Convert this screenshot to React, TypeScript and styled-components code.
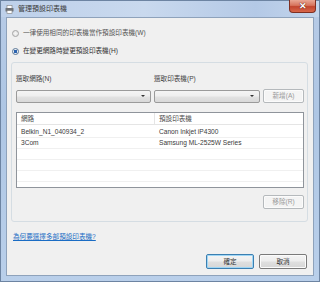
import React from 'react';
import styled, { createGlobalStyle } from 'styled-components';

const GlobalStyle = createGlobalStyle`
  html, body {
    margin: 0;
    padding: 0;
    background: #ffffff;
  }
  * {
    box-sizing: border-box;
  }
`;

const FONT = `"Liberation Sans", "Noto Sans CJK TC", sans-serif`;

// 視窗外框
const Window = styled.div`
  width: 320px;
  height: 282px;
  display: flex;
  flex-direction: column;
  border: 1px solid #6d84a2;
  background: linear-gradient(to bottom, #b7cbe6 0%, #aec6e4 40%, #b9cfea 100%);
  font-family: ${FONT};
  color: #333;
`;

const TitleBar = styled.div`
  height: 16px;
  display: flex;
  align-items: center;
  padding-left: 4px;
  gap: 4px;
  position: relative;
  background: linear-gradient(to right, #bdd0ea 0%, #c9d9ee 45%, #b4c9e6 80%, #c3d5ec 100%);
`;

const TitleText = styled.span`
  font-size: 7px;
  line-height: 8px;
  color: #3a3a3a;
`;

const CloseButton = styled.div`
  position: absolute;
  top: -1px;
  right: 3px;
  width: 27px;
  height: 13px;
  border: 1px solid #7f2f22;
  border-top: none;
  border-radius: 0 0 4px 4px;
  background: linear-gradient(to bottom, #e9a795 0%, #d7745d 45%, #c2452f 55%, #d8674a 100%);
  display: flex;
  align-items: center;
  justify-content: center;
  color: #ffffff;
  font-size: 9px;
  font-weight: bold;
  line-height: 1;
  text-shadow: 0 0 1px #5a1a10, 0 0 1px #5a1a10;
`;

const Client = styled.div`
  flex: 1;
  margin: 0 5px 5px 5px;
  border: 1px solid #8ea2bb;
  background: #f0f0f0;
  display: flex;
  flex-direction: column;
  padding: 10px 6px 6px 4px;
`;

const RadioRow = styled.label<{ $gap?: number }>`
  display: flex;
  align-items: center;
  gap: 4px;
  height: 10px;
  margin-left: 1px;
  margin-bottom: ${(p) => p.$gap ?? 0}px;
  font-size: 6.6px;
  line-height: 10px;
`;

const Radio = styled.span<{ $checked?: boolean }>`
  width: 7px;
  height: 7px;
  border-radius: 50%;
  border: 1px solid ${(p) => (p.$checked ? '#5a7696' : '#a4a4a4')};
  background: radial-gradient(circle, ${(p) => (p.$checked ? '#2d64b0 0, #2d64b0 1.5px, #e9eef4 2px' : '#f6f6f6 0, #e2e2e2 3px')});
  flex: none;
`;

const RadioText = styled.span<{ $dim?: boolean }>`
  color: ${(p) => (p.$dim ? '#555' : '#333')};
`;

const Group = styled.div`
  margin-top: 6px;
  border: 1px solid #d5dde3;
  border-radius: 3px;
  height: 160px;
  width: 297px;
  padding: 12px 3px 0 4px;
  display: flex;
  flex-direction: column;
`;

const FieldGrid = styled.div`
  display: grid;
  grid-template-columns: 135px 106px 41px;
  column-gap: 3px;
  row-gap: 6px;
  align-items: center;
`;

const FieldLabel = styled.span`
  font-size: 6.6px;
  line-height: 8px;
  color: #444;
`;

const Combo = styled.div`
  height: 13px;
  border: 1px solid #9a9a9a;
  border-radius: 2px;
  background: linear-gradient(to bottom, #f4f4f4 0%, #eeeeee 48%, #e2e2e2 52%, #d8d8d8 100%);
  display: flex;
  align-items: center;
  justify-content: flex-end;
  padding-right: 5px;
`;

const Arrow = styled.span`
  width: 0;
  height: 0;
  border-left: 2px solid transparent;
  border-right: 2px solid transparent;
  border-top: 2.5px solid #333;
`;

const Button = styled.div<{ $disabled?: boolean; $default?: boolean; $w?: number }>`
  width: ${(p) => p.$w ?? 41}px;
  height: ${(p) => (p.$default !== undefined ? 15 : 14)}px;
  border: 1px solid ${(p) => (p.$disabled ? '#b5b9bc' : p.$default ? '#3c7fb1' : '#7a7a7a')};
  border-radius: 2px;
  background: ${(p) =>
    p.$disabled
      ? '#f4f4f4'
      : 'linear-gradient(to bottom, #f4f4f4 0%, #ededed 48%, #e0e0e0 52%, #d6d6d6 100%)'};
  box-shadow: ${(p) => (p.$default ? 'inset 0 0 0 1px #9fd6f5' : 'inset 0 0 0 1px #fbfbfb')};
  display: flex;
  align-items: center;
  justify-content: center;
  font-size: 6.6px;
  line-height: 8px;
  color: ${(p) => (p.$disabled ? '#9a9a9a' : '#333')};
`;

const List = styled.div`
  margin-top: 9px;
  width: 288px;
  height: 76px;
  border: 1px solid #8f949b;
  background: #ffffff;
  display: flex;
  flex-direction: column;
  overflow: hidden;
`;

const HeaderRow = styled.div`
  display: grid;
  grid-template-columns: 138px 1fr;
  height: 12px;
  border-bottom: 1px solid #e5e5e5;
  margin-bottom: 2px;
`;

const HeaderCell = styled.div<{ $divider?: boolean }>`
  font-size: 6.6px;
  line-height: 11px;
  padding-left: 4px;
  color: #4d4d4d;
  border-right: ${(p) => (p.$divider ? '1px solid #e5e5e5' : 'none')};
`;

const Row = styled.div`
  display: grid;
  grid-template-columns: 138px 1fr;
  height: 11px;
  flex: none;
  border-bottom: 1px solid #f0f0f0;
`;

const Cell = styled.div`
  font-size: 6.6px;
  line-height: 10px;
  padding-left: 4px;
  white-space: nowrap;
  color: #3a3a3a;
`;

const RemoveRow = styled.div`
  width: 288px;
  margin-top: 7px;
  display: flex;
  justify-content: flex-end;
`;

const HelpLink = styled.a`
  margin-top: 11px;
  margin-left: 2px;
  font-size: 6.6px;
  line-height: 8px;
  color: #1a6cc4;
  text-decoration: underline;
  align-self: flex-start;
`;

const Footer = styled.div`
  margin-top: auto;
  display: flex;
  justify-content: flex-end;
  gap: 5px;
`;

const PrinterIcon = () => (
  <svg width="9" height="9" viewBox="0 0 9 9">
    <rect x="2" y="0.5" width="5" height="3" fill="#ffffff" stroke="#7a7a7a" strokeWidth="0.6" />
    <rect x="0.5" y="3" width="8" height="3.5" rx="0.6" fill="#6f7378" />
    <rect x="2" y="5.5" width="5" height="3" fill="#ffffff" stroke="#7a7a7a" strokeWidth="0.6" />
  </svg>
);

const rows = [
  { net: 'Belkin_N1_040934_2', printer: 'Canon Inkjet iP4300' },
  { net: '3Com', printer: 'Samsung ML-2525W Series' },
  { net: '', printer: '' },
  { net: '', printer: '' },
  { net: '', printer: '' },
  { net: '', printer: '' },
];

export default function App() {
  return (
    <>
      <GlobalStyle />
      <Window>
        <TitleBar>
          <PrinterIcon />
          <TitleText>管理預設印表機</TitleText>
          <CloseButton>✕</CloseButton>
        </TitleBar>
        <Client>
          <RadioRow $gap={8}>
            <Radio />
            <RadioText $dim>一律使用相同的印表機當作預設印表機(W)</RadioText>
          </RadioRow>
          <RadioRow>
            <Radio $checked />
            <RadioText>在變更網路時變更預設印表機(H)</RadioText>
          </RadioRow>

          <Group>
            <FieldGrid>
              <FieldLabel>選取網路(N)</FieldLabel>
              <FieldLabel>選取印表機(P)</FieldLabel>
              <span />
              <Combo>
                <Arrow />
              </Combo>
              <Combo>
                <Arrow />
              </Combo>
              <Button $disabled>新增(A)</Button>
            </FieldGrid>

            <List>
              <HeaderRow>
                <HeaderCell $divider>網路</HeaderCell>
                <HeaderCell>預設印表機</HeaderCell>
              </HeaderRow>
              {rows.map((r, i) => (
                <Row key={i}>
                  <Cell>{r.net}</Cell>
                  <Cell>{r.printer}</Cell>
                </Row>
              ))}
            </List>

            <RemoveRow>
              <Button $disabled>移除(R)</Button>
            </RemoveRow>
          </Group>

          <HelpLink href="#">為何要選擇多部預設印表機?</HelpLink>

          <Footer>
            <Button $default $w={48}>確定</Button>
            <Button $default={false} $w={48}>取消</Button>
          </Footer>
        </Client>
      </Window>
    </>
  );
}
